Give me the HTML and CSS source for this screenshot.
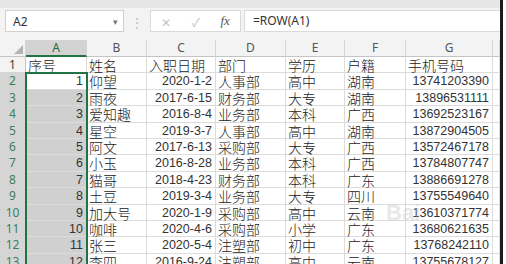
FILE: index.html
```html
<!DOCTYPE html>
<html lang="zh-CN">
<head>
    <meta charset="UTF-8">
    <meta name="viewport" content="width=device-width, initial-scale=1.0">
    <title>ROW 序号</title>
    <link rel="stylesheet" href="styles.css">
</head>
<body>
    <div class="window">
        <div class="top-strip"></div>
        <div class="formula-bar">
            <div class="name-box">
                <span>A2</span>
                <span class="caret">&#9662;</span>
            </div>
            <div class="grip">&#8942;</div>
            <div class="fx-buttons">
                <span class="fx-btn">&#10005;</span>
                <span class="fx-btn">&#10003;</span>
                <span class="fx-btn fx">fx</span>
            </div>
            <div class="formula-input">=ROW(A1)</div>
        </div>

        <div class="sheet" id="sheet">
            <div class="col-head corner">
                <svg width="9" height="9" viewBox="0 0 9 9"><polygon points="9,0 9,9 0,9" fill="#b4b4b4"/></svg>
            </div>
            <div class="col-head active">A</div>
            <div class="col-head">B</div>
            <div class="col-head">C</div>
            <div class="col-head">D</div>
            <div class="col-head">E</div>
            <div class="col-head">F</div>
            <div class="col-head">G</div>
            <div class="col-head"></div>
        </div>
        <div class="selection"></div>
        <div class="watermark">Bai</div>
    </div>

    <script>
        const rows = [
            ['序号', '姓名', '入职日期', '部门', '学历', '户籍', '手机号码'],
            ['1', '仰望', '2020-1-2', '人事部', '高中', '湖南', '13741203390'],
            ['2', '雨夜', '2017-6-15', '财务部', '大专', '湖南', '13896531111'],
            ['3', '爱知趣', '2016-8-4', '业务部', '本科', '广西', '13692523167'],
            ['4', '星空', '2019-3-7', '人事部', '高中', '湖南', '13872904505'],
            ['5', '阿文', '2017-6-13', '采购部', '大专', '广西', '13572467178'],
            ['6', '小玉', '2016-8-28', '业务部', '本科', '广西', '13784807747'],
            ['7', '猫哥', '2018-4-23', '财务部', '本科', '广东', '13886691278'],
            ['8', '土豆', '2019-3-4', '业务部', '大专', '四川', '13755549640'],
            ['9', '加大号', '2020-1-9', '采购部', '高中', '云南', '13610371774'],
            ['10', '咖啡', '2020-4-6', '采购部', '小学', '广东', '13680621635'],
            ['11', '张三', '2020-5-4', '注塑部', '初中', '广东', '13768242110'],
            ['12', '李四', '2016-9-24', '注塑部', '高中', '云南', '13755678127']
        ];

        // columns A, C and G hold numbers, right aligned
        const numberCols = [0, 2, 6];
        const sheet = document.getElementById('sheet');

        rows.forEach((row, r) => {
            const head = document.createElement('div');
            head.className = r === 0 ? 'row-head' : 'row-head active';
            head.textContent = r + 1;
            sheet.appendChild(head);

            row.forEach((value, c) => {
                const cell = document.createElement('div');
                cell.className = 'cell';
                if (r > 0 && numberCols.includes(c)) cell.classList.add('num');
                if (c === 0 && r > 1) cell.classList.add('selected');
                cell.textContent = value;
                sheet.appendChild(cell);
            });

            const spare = document.createElement('div');
            spare.className = 'cell';
            sheet.appendChild(spare);
        });
    </script>
</body>
</html>
```

FILE: styles.css
```css
body {
    margin: 0;
    background-color: #fff;
    font-family: "Noto Sans CJK SC", sans-serif;
}

.window {
    position: relative;
    width: 500px;
    height: 264px;
    overflow: hidden;
    border-right: 3px solid #1c1c1c;
    background-color: #f3f3f3;
}

.top-strip {
    height: 8px;
    background-color: #e6e6e6;
}

.formula-bar {
    display: flex;
    align-items: center;
    height: 22px;
    padding: 2px 0 8px 5px;
}

.name-box {
    display: flex;
    align-items: center;
    justify-content: space-between;
    width: 119px;
    height: 22px;
    box-sizing: border-box;
    padding: 0 5px 0 7px;
    border: 1px solid #d0d0d0;
    background-color: #fff;
    font-family: "Noto Sans", sans-serif;
    font-size: 12px;
    color: #333;
}

.caret {
    font-size: 9px;
    color: #777;
}

.grip {
    width: 26px;
    text-align: center;
    font-size: 12px;
    color: #b9b9b9;
}

.fx-buttons {
    display: flex;
    align-items: center;
    justify-content: space-around;
    width: 91px;
    height: 22px;
    box-sizing: border-box;
    border: 1px solid #dadada;
    background-color: #fff;
}

.fx-btn {
    font-size: 12px;
    color: #c4c4c4;
}

.fx {
    font-family: "Liberation Serif", serif;
    font-style: italic;
    font-size: 13px;
    color: #555;
}

.formula-input {
    flex: 1;
    height: 22px;
    box-sizing: border-box;
    margin-left: 3px;
    padding-left: 8px;
    border: 1px solid #dadada;
    border-right: none;
    background-color: #fff;
    font-family: "Noto Sans", sans-serif;
    font-size: 12px;
    line-height: 20px;
    color: #333;
}

.sheet {
    display: grid;
    grid-template-columns: 26px 61px 60px 69px 70px 59px 61px 87px 7px;
    grid-template-rows: 17px;
    grid-auto-rows: 16.4px;
    background-color: #fff;
}

.col-head {
    box-sizing: border-box;
    border-right: 1px solid #d5d5d5;
    border-bottom: 1px solid #c4c4c4;
    background-color: #f3f3f3;
    font-family: "Noto Sans", sans-serif;
    font-size: 12px;
    line-height: 16px;
    text-align: center;
    color: #555;
}

.col-head.active {
    border-bottom: 2px solid #217346;
    background-color: #d3d3d3;
    color: #1e6b40;
}

.corner {
    display: flex;
    align-items: flex-end;
    justify-content: flex-end;
    padding: 0 2px 2px 0;
}

.row-head {
    box-sizing: border-box;
    border-right: 1px solid #c4c4c4;
    border-bottom: 1px solid #d5d5d5;
    background-color: #f3f3f3;
    font-family: "Noto Sans", sans-serif;
    font-size: 12px;
    line-height: 16px;
    text-align: center;
    color: #444;
}

.row-head.active {
    background-color: #d5d5d5;
    color: #3f7f57;
}

.cell {
    box-sizing: border-box;
    padding: 0 2px;
    border-right: 1px solid #dcdcdc;
    border-bottom: 1px solid #dcdcdc;
    font-size: 14px;
    font-weight: 300;
    line-height: 16px;
    color: #222;
    white-space: nowrap;
}

.cell.num {
    padding-right: 3px;
    font-family: "Liberation Sans", sans-serif;
    font-weight: 400;
    font-size: 12.5px;
    text-align: right;
    color: #333;
}

.cell.selected {
    background-color: #d0d0d0;
}

.selection {
    position: absolute;
    top: 72.4px;
    left: 25px;
    width: 59px;
    height: 200px;
    border: 2px solid #217346;
}

.watermark {
    position: absolute;
    top: 200px;
    left: 386px;
    font-family: "Liberation Sans", sans-serif;
    font-weight: bold;
    font-size: 22px;
    color: rgba(190, 190, 190, 0.35);
}
```
